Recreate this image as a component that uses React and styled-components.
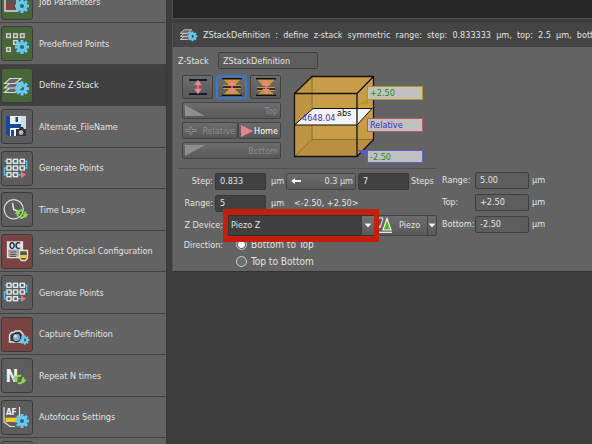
import React, { useState } from 'react';
import styled, { createGlobalStyle } from 'styled-components';

const GlobalStyle = createGlobalStyle`
  * {
    box-sizing: border-box;
  }
  body {
    margin: 0;
    background: #3d3d3d;
    color: #e2e2e2;
    font-family: 'DejaVu Sans Condensed', 'DejaVu Sans', sans-serif;
    font-size: 9px;
    line-height: 12px;
  }
  button,
  input,
  select {
    margin: 0;
    font: inherit;
    color: inherit;
  }
  svg {
    display: block;
    flex: none;
  }
`;

const Window = styled.div`
  display: flex;
  height: 100vh;
  overflow: hidden;
`;

const Sidebar = styled.nav`
  flex: 0 0 167px;
  overflow: hidden;
  border-right: 1px solid #383838;
`;

const TaskList = styled.ul`
  list-style: none;
  margin: -18px 0 0;
  padding: 0;
`;

const Task = styled.li`
  height: 41px;
  border-bottom: 1px solid #434343;
  background: ${p => (p.$active ? '#404040' : '#636363')};
  &:nth-child(even) {
    height: 42px;
  }
`;

const TaskButton = styled.button`
  display: flex;
  align-items: center;
  gap: 6px;
  width: 100%;
  height: 100%;
  padding: 0 1px;
  border: 0;
  background: none;
  text-align: left;
  white-space: nowrap;
`;

const tones = { green: '#48663a', red: '#7a4343', plain: '#5d5d5d' };

const TaskIcon = styled.span`
  width: 32px;
  height: 35px;
  border: 1px solid #3b3b3b;
  border-radius: 3px;
  background: ${p => tones[p.$tone]};
`;

const Main = styled.main`
  flex: 1;
  min-width: 0;
  padding-left: 5px;
`;

const Log = styled.div`
  height: 19px;
  border-bottom: 1px solid #505050;
  border-left: 1px solid #505050;
  background: #262626;
`;

const Panel = styled.section`
  margin-top: 4px;
  border-left: 1px solid #525252;
  border-bottom: 1px solid #333;
  background: #636363;
`;

const PanelHeader = styled.header`
  display: flex;
  align-items: center;
  gap: 5px;
  height: 24px;
  padding-left: 7px;
  overflow: hidden;
  background: #444;
`;

const Heading = styled.h1`
  margin: 0;
  font-size: 9px;
  font-weight: normal;
  white-space: pre;
`;

const PanelBody = styled.div`
  padding: 5px 5px 1px;
`;

const NameRow = styled.div`
  display: flex;
  align-items: center;
  gap: 8px;
`;

const NameLabel = styled.label`
  width: 32px;
  white-space: nowrap;
`;

const Field = styled.input`
  width: ${p => p.$width || 51}px;
  height: 17px;
  padding: 0 4px;
  border: 1px solid ${p => (p.readOnly ? '#3f3f3f' : '#383838')};
  border-radius: 2px;
  background: ${p => (p.readOnly ? '#5d5d5d' : '#414141')};
  outline: none;
`;

const StackArea = styled.div`
  display: flex;
  gap: 4px;
  margin-top: 6px;
  padding-left: 4px;
`;

const Tools = styled.div`
  display: flex;
  flex-direction: column;
  gap: 3px;
  width: 99px;
`;

const ToolRow = styled.div`
  display: flex;
  justify-content: space-between;
`;

const Button = styled.button`
  display: flex;
  align-items: center;
  justify-content: space-between;
  height: 17px;
  padding: 0 2px;
  border: 1px solid #434343;
  border-radius: 2px;
  background: linear-gradient(#6c6c6c, #595959);
  white-space: nowrap;
  &:disabled {
    color: #8b8b8b;
  }
`;

const HomeButton = styled(Button)`
  width: 43px;
  color: #fff;
`;

const RelativeButton = styled(Button)`
  width: 56px;
`;

const ModeButton = styled(Button)`
  justify-content: center;
  width: 31px;
  height: 24px;
  border: ${p => (p.$selected ? '2px solid #2f7bd6' : '1px solid #404040')};
`;

const StepButton = styled(Button)`
  width: 70px;
  margin-right: 2px;
  padding: 0 2px 0 4px;
`;

const Cube = styled.svg`
  overflow: visible;
`;

const Form = styled.div`
  display: flex;
  gap: 5px;
`;

const LeftForm = styled.div`
  width: 259px;
  padding-top: 1px;
  margin-top: 9px;
  border-top: 1px solid #515151;
`;

const RightForm = styled.div`
  padding-top: 10px;
`;

const Row = styled.div`
  display: flex;
  align-items: center;
  height: ${p => (p.$short ? 17 : 22)}px;
  white-space: nowrap;
`;

const Label = styled.label`
  width: ${p => (p.$wide ? 45 : 35)}px;
  margin-right: 2px;
  text-align: right;
`;

const RightLabel = styled.label`
  width: 33px;
`;

const Unit = styled.span`
  width: ${p => p.$width || 20}px;
  padding-left: ${p => p.$indent || 5}px;
`;

const StepsLabel = styled.label`
  padding-left: 2px;
`;

const Picker = styled.div`
  position: relative;
  flex: 1;
  height: 21px;
  margin-left: 3px;
  background: #3f3f3f;
  /* callout frame drawn over the neighbouring rows */
  &::after {
    content: '';
    position: absolute;
    inset: -6px -5px;
    z-index: 1;
    border: solid #c3200b;
    border-width: 6px 5px;
    pointer-events: none;
  }
`;

const Select = styled.select`
  width: 100%;
  height: 100%;
  padding: 0 16px 0 2px;
  border: 1px solid #333;
  background: none;
  appearance: none;
  outline: none;
`;

const PickerArrow = styled.span`
  position: absolute;
  top: 1px;
  right: 0;
  bottom: 1px;
  display: flex;
  align-items: center;
  padding: 0 2px;
  background: linear-gradient(#717171, #595959);
  pointer-events: none;
`;

const PiezoButton = styled(Button)`
  justify-content: flex-start;
  gap: 6px;
  width: 54px;
  height: 21px;
  padding: 0 0 0 3px;
  border-radius: 0;
`;

const DropButton = styled(Button)`
  width: 10px;
  height: 21px;
  padding: 0;
  margin-left: -1px;
  justify-content: center;
  border-radius: 0 2px 2px 0;
`;

const RadioLabel = styled.label`
  display: flex;
  align-items: center;
  gap: 4px;
  margin-left: 11px;
  font-size: 10px;
`;

const Radio = styled.input`
  width: 11px;
  height: 11px;
  border: 1px solid #d0d0d0;
  border-radius: 50%;
  background: #6e6e6e;
  appearance: none;
  &:checked {
    background: radial-gradient(#fff 0 3px, #555 4px);
  }
`;

const teeth = [0, 45, 90, 135, 180, 225, 270, 315];

const Gear = ({ x, y, size = 7 }) => (
  <g transform={`translate(${x} ${y}) scale(${size / 7})`} fill="#5fcbf7">
    {teeth.map(a => (
      <rect key={a} x="-1.5" y="-7" width="3" height="4" transform={`rotate(${a})`} />
    ))}
    <circle r="3.6" fill="none" stroke="#5fcbf7" strokeWidth="3" />
  </g>
);

const Refresh = ({ x, y }) => (
  <g transform={`translate(${x} ${y})`} fill="none" stroke="#86d94c" strokeWidth="2">
    <path d="M-3.8 2.5V0A3.8 3.8 0 0 1 1.5 -3.5" />
    <path d="M3.8 -2.5V0A3.8 3.8 0 0 1 -1.5 3.5" />
    <path d="M-7 0L-4 -4L-1 0ZM7 0L4 4L1 0Z" fill="#86d94c" stroke="none" />
  </g>
);

const Layers = () => (
  <g fill="#666" stroke="#d8d8d8" strokeWidth="1.2">
    {[9, 4.5, 0].map(d => (
      <path key={d} d={`M8 ${9.5 + d}H19L13 ${14.5 + d}H2.5Z`} />
    ))}
  </g>
);

const squares = [[7, 9.3], [13.5, 9.3], [20.3, 9.3], [7, 16], [13.5, 16], [20.3, 16], [7, 22.7], [13.5, 22.7]];

const drawings = {
  job: (
    <>
      <path d="M3 13H15V25H3Z" fill="#555" stroke="#ddd" strokeWidth="1.4" />
      <path d="M4 20H12" stroke="#d5202a" strokeWidth="2" />
      <Gear x={20} y={20} />
    </>
  ),
  points: (
    <>
      {[[6.5, 8.7], [13.5, 8.7], [20.3, 8.7], [13.5, 15.5], [6.5, 22.5]].map(([x, y]) => (
        <rect key={`${x}-${y}`} x={x - 1.8} y={y - 1.8} width="3.6" height="3.6" fill="#555" stroke="#d0d0c8" strokeWidth="1.5" />
      ))}
      <Gear x={20} y={20} />
    </>
  ),
  stack: (
    <>
      <Layers />
      <Gear x={20} y={19.5} />
    </>
  ),
  file: (
    <>
      <path d="M4 6H23V26H6L4 24Z" fill="#174a96" />
      <path d="M8 6H19V14H8Z" fill="#e8eef5" />
      <path d="M13.5 7H16V12H13.5Z" fill="#174a96" />
      <path d="M19 6H24V20H19Z" fill="#cfdcec" />
      <path d="M8 18H18V26H8Z" fill="#f4f4f4" />
      <path d="M9 20H12V26H9Z" fill="#174a96" />
      <path d="M14 19H17L18 17H21L22 19H24V26H14Z" fill="#333" />
      <circle cx="19" cy="22.5" r="3" fill="#a9bccb" stroke="#222" />
    </>
  ),
  generate: (
    <>
      <path d="M2.5 9.3H24.7V16H2.5V22.7H19" fill="none" stroke="#4cc3ee" strokeWidth="1.4" />
      {squares.map(([x, y]) => (
        <rect key={`${x}-${y}`} x={x - 2} y={y - 2} width="4" height="4" fill="#5d5d5d" stroke="#e4e4e4" strokeWidth="1.4" />
      ))}
      <path d="M19 19.2L24 22.7L19 26.2Z" fill="#f0707c" />
    </>
  ),
  time: (
    <>
      <circle cx="11.7" cy="16.3" r="9.6" fill="none" stroke="#ddd" strokeWidth="1.2" />
      <path d="M10.5 10L11.7 16.5L17 19" fill="none" stroke="#e8e8e8" strokeWidth="1.5" />
      <Refresh x={19.5} y={21} />
    </>
  ),
  optical: (
    <>
      <path d="M5.5 7H20.5V22.5H5.5Z" fill="#a5a5a5" stroke="#e2e2e2" strokeWidth="1.3" />
      <path d="M6 7.5H20V14.5H6Z" fill="#e2e2e2" />
      <text x="7" y="14" fontSize="8" fontWeight="bold" fill="#222">OC</text>
      <path d="M8 17H14M8 19.5H14M8 21.5H14" stroke="#555" />
      <path d="M17.5 15.5H25.5V23L23.5 25.5H19.5L17.5 23Z" fill="#555" stroke="#e2e2e2" strokeWidth="1.3" />
      <path d="M18.2 20H24.8V23H18.2Z" fill="#f1d21c" />
    </>
  ),
  capture: (
    <>
      <path d="M7.5 24V17L9.5 14.5H12L13.5 13H18L19.5 14.5L21 16V24Z" fill="#4e4e4e" stroke="#e5e5e5" strokeWidth="1.4" />
      <circle cx="14.5" cy="19.5" r="4.3" fill="#7fa8c4" stroke="#20262b" strokeWidth="1.2" />
      <circle cx="13.5" cy="18.2" r="1.5" fill="#cfe0ec" />
      <Gear x={22.7} y={22} size={4.6} />
    </>
  ),
  repeat: (
    <>
      <text x="3.5" y="22.5" fontSize="17" fontWeight="bold" fill="#f2f2f2">N</text>
      <Refresh x={17.5} y={20.5} />
    </>
  ),
  focus: (
    <>
      <path d="M2 6V21L8 25.5H13M17.5 6V16" fill="none" stroke="#e0e0e0" strokeWidth="1.2" />
      <path d="M3.5 16.7H15V21H3.5Z" fill="#f1cf1c" />
      <text x="4" y="14" fontSize="8" fontWeight="bold" fill="#f2f2f2">AF</text>
      <Gear x={20} y={20} />
    </>
  ),
};

const tasks = [
  { label: 'Job Parameters', icon: 'job', tone: 'green' },
  { label: 'Predefined Points', icon: 'points', tone: 'green' },
  { label: 'Define Z-Stack', icon: 'stack', tone: 'green', active: true },
  { label: 'Alternate_FileName', icon: 'file', tone: 'plain' },
  { label: 'Generate Points', icon: 'generate', tone: 'plain' },
  { label: 'Time Lapse', icon: 'time', tone: 'plain' },
  { label: 'Select Optical Configuration', icon: 'optical', tone: 'red' },
  { label: 'Generate Points', icon: 'generate', tone: 'plain' },
  { label: 'Capture Definition', icon: 'capture', tone: 'red' },
  { label: 'Repeat N times', icon: 'repeat', tone: 'plain' },
  { label: 'Autofocus Settings', icon: 'focus', tone: 'plain' },
  { label: '', tone: 'plain' },
];

const DownArrow = () => (
  <svg width="8" height="5" viewBox="0 0 8 5">
    <path d="M0.5 0.5H7.5L4 4.5Z" fill="#f4f4f4" />
  </svg>
);

const RangeArrow = () => (
  <path d="M12 5V15M9.5 7.5L12 4L14.5 7.5ZM9.5 12.5L12 16L14.5 12.5Z" fill="#f77f8b" stroke="#f77f8b" strokeWidth="1.4" />
);

const modes = {
  'Top and bottom': <path d="M3 3H21M3 17H21" stroke="#0f1e33" strokeWidth="2" />,
  'Symmetric range': (
    <>
      <path d="M3 2H21L15 8H9ZM3 18H21L15 12H9Z" fill="#c69a3c" />
      <path d="M2 1.8H22M2 18.2H22" stroke="#111" strokeWidth="1.6" />
      <path d="M3 8H21V12H3Z" fill="#c69a3c" />
      <path d="M3 10H21" stroke="#111" strokeWidth="1.6" />
    </>
  ),
  'Asymmetric range': (
    <>
      <path d="M3 2H21L15 9H9ZM3 18H21L15 13H9Z" fill="#c69a3c" />
      <path d="M2 1.8H22M2 18.2H22" stroke="#111" strokeWidth="1.6" />
      <path d="M3 10H21V14H3Z" fill="#c69a3c" />
      <path d="M3 12H21" stroke="#111" strokeWidth="1.6" />
    </>
  ),
};

const StackCube = () => (
  <Cube width="140" height="84" viewBox="0 5 140 84" role="img" aria-label="Z-stack range">
    <path d="M9.5 23.5L27 6.5H88.5V69.5L72 86.5H9.5Z" fill="#c79d48" />
    <path d="M9.5 86.5L27 69.5H88.5L72 86.5Z" fill="#b98f40" />
    <path d="M9.5 23.5L27 6.5V69.5L9.5 86.5Z" fill="#bf9543" />
    <path d="M27 6.5V69.5H88.5M27 69.5L9.5 86.5" fill="none" stroke="#8f6f30" />
    <path d="M9.5 55L28 38.5H87L72 55Z" fill="#f4f4f4" stroke="#111" />
    <path d="M9.5 23.5L27 6.5H88.5V69.5L72 86.5H9.5ZM9.5 23.5H72V86.5M72 23.5L88.5 6.5" fill="none" stroke="#15120a" strokeWidth="1.3" />
    <path d="M72 35L83 29V34Z" fill="#b8961e" />
    <path d="M72 80L83 80V88Z" fill="#5a5ac0" />
    <g fill="#c1c1c1">
      <rect x="82.5" y="16.5" width="55" height="13" stroke="#b8961e" />
      <rect x="82.5" y="48.5" width="55" height="13" stroke="#bb5a60" />
      <rect x="82.5" y="80.5" width="55" height="12" stroke="#5f5fc4" />
    </g>
    <g fill="#1f8a24">
      <text x="85" y="26">+2.50</text>
      <text x="85" y="90">-2.50</text>
    </g>
    <g fill="#3532c0">
      <text x="85" y="58">Relative</text>
      <text x="17" y="51">4648.04</text>
    </g>
    <text x="52" y="46" fill="#111">abs</text>
  </Cube>
);

const results = [
  { id: 'total', label: 'Range:', value: '5.00' },
  { id: 'top', label: 'Top:', value: '+2.50' },
  { id: 'bottom', label: 'Bottom:', value: '-2.50' },
];

export default function App() {
  const [mode, setMode] = useState('Symmetric range');

  return (
    <>
      <GlobalStyle />
      <Window>
        <Sidebar>
          <TaskList>
            {tasks.map((task, i) => (
              <Task key={i} $active={task.active}>
                <TaskButton type="button">
                  <TaskIcon $tone={task.tone}>
                    <svg width="30" height="33" viewBox="0 0 30 33">
                      {drawings[task.icon]}
                    </svg>
                  </TaskIcon>
                  {task.label}
                </TaskButton>
              </Task>
            ))}
          </TaskList>
        </Sidebar>
        <Main>
          <Log />
          <Panel>
            <PanelHeader>
              <svg width="18" height="14" viewBox="2 7 26 20">
                <Layers />
                <Gear x={20} y={19} />
              </svg>
              <Heading>
                {'ZStackDefinition  :  define  z-stack  symmetric  range:  step:  0.833333  µm,  top:  2.5  µm,  bottom:  -2.5  µm'}
              </Heading>
            </PanelHeader>
            <PanelBody>
              <NameRow>
                <NameLabel htmlFor="name">Z-Stack</NameLabel>
                <Field id="name" $width={100} readOnly value="ZStackDefinition" />
              </NameRow>
              <StackArea>
                <Tools>
                  <ToolRow>
                    {Object.keys(modes).map(name => (
                      <ModeButton
                        key={name}
                        type="button"
                        aria-label={name}
                        $selected={mode === name}
                        onClick={() => setMode(name)}
                      >
                        <svg width="24" height="20" viewBox="0 0 24 20">
                          {modes[name]}
                          <RangeArrow />
                        </svg>
                      </ModeButton>
                    ))}
                  </ToolRow>
                  <Button type="button" disabled>
                    <svg width="20" height="11" viewBox="0 0 20 11">
                      <path d="M0 0L20 11H0Z" fill="#8e8e8e" />
                    </svg>
                    Top
                  </Button>
                  <ToolRow>
                    <RelativeButton type="button" disabled>
                      <svg width="12" height="9" viewBox="0 0 12 9">
                        <path d="M0.5 3.5H5V1H7V3.5H11V5.5H7V8H5V5.5H0.5Z" fill="none" stroke="#858585" />
                      </svg>
                      Relative
                    </RelativeButton>
                    <HomeButton type="button">
                      <svg width="12" height="12" viewBox="0 0 12 12">
                        <path d="M0 0L12 6L0 12Z" fill="#e88488" />
                      </svg>
                      Home
                    </HomeButton>
                  </ToolRow>
                  <Button type="button" disabled>
                    <svg width="20" height="11" viewBox="0 0 20 11">
                      <path d="M0 0H20L0 11Z" fill="#8e8e8e" />
                    </svg>
                    Bottom
                  </Button>
                </Tools>
                <StackCube />
              </StackArea>
              <Form>
                <LeftForm>
                  <Row>
                    <Label htmlFor="step">Step:</Label>
                    <Field id="step" defaultValue="0.833" />
                    <Unit>µm</Unit>
                    <StepButton type="button">
                      <svg width="12" height="8" viewBox="0 0 12 8">
                        <path d="M0 4L4 1V3H10V5H4V7Z" fill="#f4f4f4" />
                      </svg>
                      0.3 µm
                    </StepButton>
                    <Field id="steps" defaultValue="7" />
                    <StepsLabel htmlFor="steps">Steps</StepsLabel>
                  </Row>
                  <Row>
                    <Label htmlFor="range">Range:</Label>
                    <Field id="range" defaultValue="5" />
                    <Unit $width={28}>µm</Unit>
                    <span>&lt;-2.50, +2.50&gt;</span>
                  </Row>
                  <Row>
                    <Label $wide htmlFor="device">Z Device:</Label>
                    <Picker>
                      <Select id="device">
                        <option>Piezo Z</option>
                      </Select>
                      <PickerArrow>
                        <DownArrow />
                      </PickerArrow>
                    </Picker>
                    <PiezoButton type="button">
                      <svg width="15" height="16" viewBox="0 0 15 16">
                        <path d="M-2 1H5L2 11Z" fill="#555" stroke="#eee" />
                        <path d="M9 1.5L13 13H5Z" fill="#4fb51f" stroke="#f4f4f4" strokeWidth="1.2" />
                        <path d="M0 15.3H14" stroke="#f4f4f4" strokeWidth="1.2" />
                      </svg>
                      Piezo
                    </PiezoButton>
                    <DropButton type="button" aria-label="More devices">
                      <DownArrow />
                    </DropButton>
                  </Row>
                  <Row $short>
                    <Label $wide as="span">Direction:</Label>
                    <RadioLabel>
                      <Radio type="radio" name="direction" defaultChecked />
                      Bottom to Top
                    </RadioLabel>
                  </Row>
                  <Row $short>
                    <Label $wide as="span" />
                    <RadioLabel>
                      <Radio type="radio" name="direction" />
                      Top to Bottom
                    </RadioLabel>
                  </Row>
                </LeftForm>
                <RightForm>
                  {results.map(({ id, label, value }) => (
                    <Row key={id}>
                      <RightLabel htmlFor={id}>{label}</RightLabel>
                      <Field id={id} $width={54} readOnly value={value} />
                      <Unit $indent={3}>µm</Unit>
                    </Row>
                  ))}
                </RightForm>
              </Form>
            </PanelBody>
          </Panel>
        </Main>
      </Window>
    </>
  );
}
